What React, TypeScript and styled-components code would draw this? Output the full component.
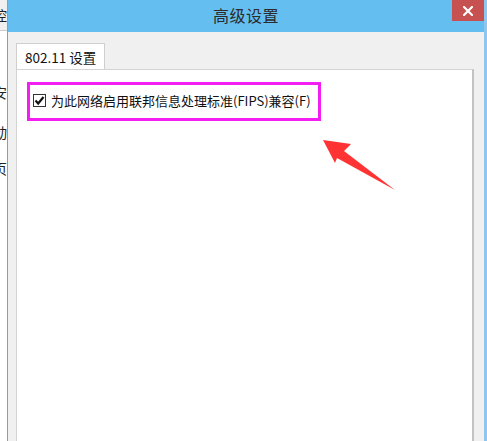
import React from 'react'
import styled, { createGlobalStyle } from 'styled-components'

const GlobalStyle = createGlobalStyle`
  html, body {
    margin: 0;
    padding: 0;
    width: 487px;
    height: 441px;
    overflow: hidden;
    background: #fff;
    font-family: "Noto Sans CJK SC", "Noto Sans", sans-serif;
  }
`

const Screen = styled.div`
  display: flex;
  width: 487px;
  height: 441px;
  background: #fff;
`

// the window sitting behind the dialog, only a sliver of it shows
const Behind = styled.div`
  width: 7px;
  flex: none;
  display: flex;
  flex-direction: column;
  overflow: hidden;
`

const BehindBar = styled.div`
  height: 30px;
  background: #f0f0f0;
  border-bottom: 1px solid #c9c9c9;
  display: flex;
  align-items: center;
  justify-content: flex-end;
`

const BehindChar = styled.span<{ $top: number }>`
  display: block;
  margin-top: ${({ $top }) => $top}px;
  margin-left: -7px;
  font-size: 14px;
  line-height: 16px;
  color: #222;
  white-space: nowrap;
`

const Dialog = styled.div`
  flex: 1;
  display: flex;
  flex-direction: column;
  border-left: 1px solid #6ba7d4;
  border-right: 3px solid #8fc6ee;
  background: #f0f0f0;
  position: relative;
`

const TitleBar = styled.div`
  height: 32px;
  background: #65bef0;
  display: flex;
  align-items: center;
  justify-content: center;
  position: relative;
`

const Title = styled.div`
  font-size: 16px;
  line-height: 20px;
  margin-top: -3px;
  color: #2b2b2b;
  letter-spacing: 0.5px;
`

const CloseButton = styled.div`
  position: absolute;
  right: 0;
  top: 0;
  width: 32px;
  height: 21px;
  background: #c75050;
  display: flex;
  align-items: center;
  justify-content: center;
`

const Body = styled.div`
  flex: 1;
  display: flex;
  flex-direction: column;
  padding: 11px 10px 0 8px;
`

const TabRow = styled.div`
  display: flex;
`

const Tab = styled.div`
  height: 26px;
  padding: 0 0 0 8px;
  width: 89px;
  box-sizing: border-box;
  background: #fff;
  border: 1px solid #cfcfcf;
  border-bottom: none;
  display: flex;
  align-items: center;
  font-size: 13.5px;
  color: #111;
  white-space: nowrap;
`

const Panel = styled.div`
  flex: 1;
  background: #fff;
  border: 1px solid #d4d4d4;
  border-right: 2px solid #c2c2c2;
  border-bottom: none;
  padding: 12px 0 0 10px;
`

const Highlight = styled.div`
  width: 294px;
  height: 39px;
  box-sizing: border-box;
  border: 3px solid #f21ef2;
  padding: 6px 0 0 3px;
`

const CheckRow = styled.label`
  display: flex;
  align-items: center;
  gap: 5px;
  font-size: 13px;
  color: #111;
  white-space: nowrap;
`

const CheckBox = styled.span`
  width: 13px;
  height: 13px;
  box-sizing: border-box;
  border: 1px solid #333;
  background: #fff;
  display: flex;
  align-items: center;
  justify-content: center;
`

const Annotation = styled.svg`
  position: absolute;
  left: 0;
  top: 0;
  pointer-events: none;
`

export default function App() {
  return (
    <Screen>
      <GlobalStyle />
      <Behind>
        <BehindBar>
          <BehindChar $top={0}>控</BehindChar>
        </BehindBar>
        <BehindChar $top={53}>安</BehindChar>
        <BehindChar $top={24}>动</BehindChar>
        <BehindChar $top={20}>页</BehindChar>
      </Behind>
      <Dialog>
        <TitleBar>
          <Title>高级设置</Title>
          <CloseButton>
            <svg width="10" height="10" viewBox="0 0 10 10">
              <path d="M1 1 L9 9 M9 1 L1 9" stroke="#fff" strokeWidth="2.2" strokeLinecap="square" />
            </svg>
          </CloseButton>
        </TitleBar>
        <Body>
          <TabRow>
            <Tab>802.11 设置</Tab>
          </TabRow>
          <Panel>
            <Highlight>
              <CheckRow>
                <CheckBox>
                  <svg width="11" height="11" viewBox="0 0 11 11">
                    <path d="M1.5 5.5 L4.2 8.5 L9.5 2" stroke="#111" strokeWidth="2.2" fill="none" />
                  </svg>
                </CheckBox>
                为此网络启用联邦信息处理标准(FIPS)兼容(F)
              </CheckRow>
            </Highlight>
          </Panel>
        </Body>
      </Dialog>
      <Annotation width="487" height="441" viewBox="0 0 487 441">
        <path d="M323 140 L351 144 L344 151 L395 190 L337 158 L335 163 Z" fill="#ff3333" />
      </Annotation>
    </Screen>
  )
}
